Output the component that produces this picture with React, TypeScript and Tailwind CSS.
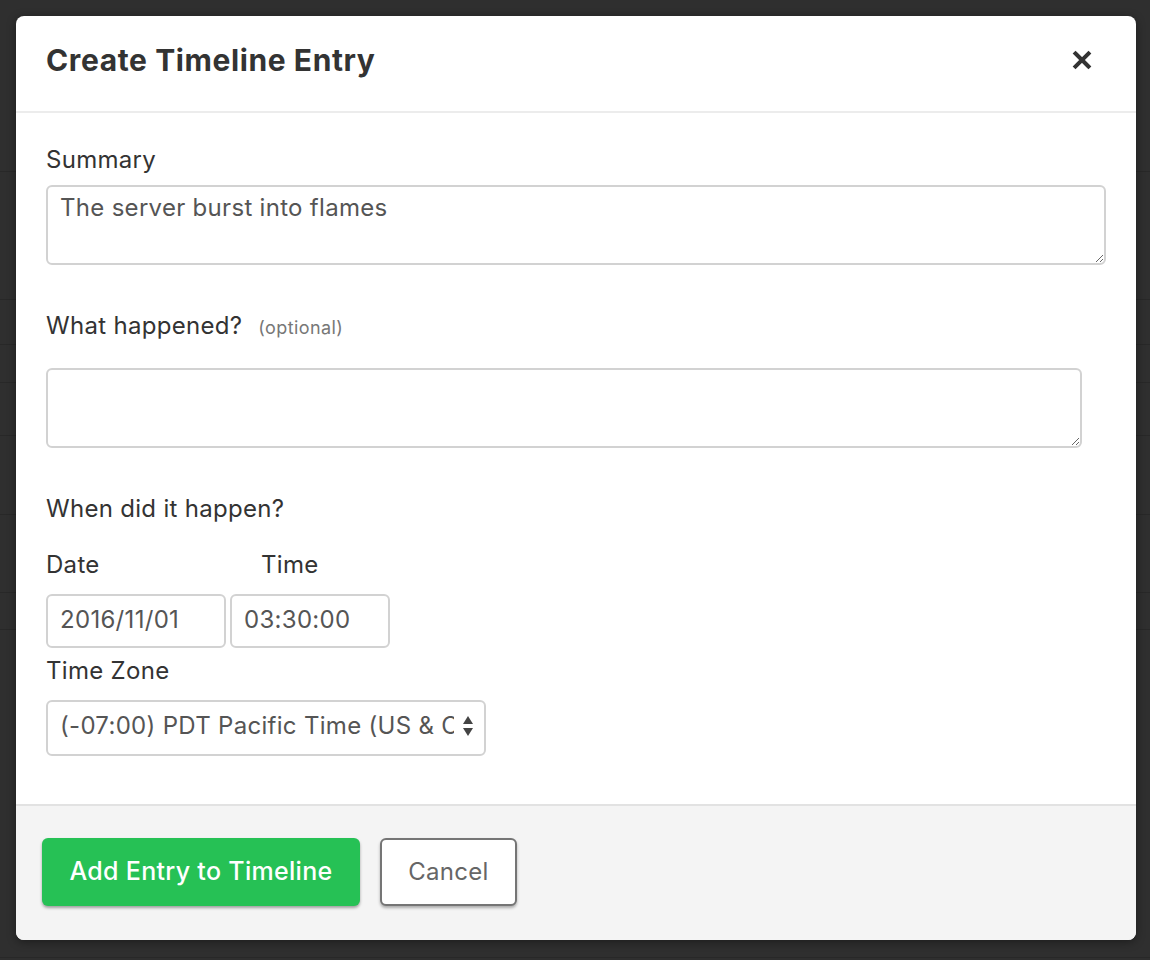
import React from 'react';

const font = { fontFamily: 'Inter, Lato, "Open Sans", sans-serif' };

// faint rows of the page behind the overlay, only visible at the left edge
const bgRows = [172, 128, 45, 38, 53, 79, 78, 37, 328];

function CloseIcon() {
  return (
    <svg width="20" height="20" viewBox="0 0 20 20" className="text-[#333]">
      <path d="M3.5 3.5 L16.5 16.5 M16.5 3.5 L3.5 16.5" stroke="currentColor" strokeWidth="4" strokeLinecap="square" />
    </svg>
  );
}

function SelectArrows() {
  return (
    <svg width="12" height="22" viewBox="0 0 12 22" className="text-[#444]">
      <path d="M6 1 L11 9 L1 9 Z" fill="currentColor" />
      <path d="M6 21 L11 13 L1 13 Z" fill="currentColor" />
    </svg>
  );
}

export default function App() {
  return (
    <div className="relative h-[960px] w-full bg-[#2f2f2f] overflow-hidden" style={font}>
      {/* Background page */}
      <div className="flex flex-col">
        {bgRows.map((h, i) => (
          <div key={i} className="border-b border-[#282828]" style={{ height: h }} />
        ))}
      </div>

      {/* Modal */}
      <div className="absolute left-4 top-4 w-[1120px] h-[924px] bg-white rounded-lg overflow-hidden flex flex-col shadow-[0_2px_10px_rgba(0,0,0,0.4)]">
        <div className="h-[97px] flex items-center justify-between pl-[30px] pr-[44px] border-b-2 border-[#ececec] shrink-0">
          <h1 className="text-[30px] font-bold text-[#333] leading-none -mt-2 tracking-[0.6px]">Create Timeline Entry</h1>
          <button className="-mt-2">
            <CloseIcon />
          </button>
        </div>

        <div className="flex-1 px-[30px] pt-[32px] text-[24px] leading-[30px] text-[#333] tracking-[0.3px]">
          <label className="block">Summary</label>
          <textarea
            className="mt-[10px] block w-[1060px] h-[80px] border-2 border-[#d2d2d2] rounded-md px-[12px] py-[6px] text-[#555] outline-none resize-y"
            defaultValue="The server burst into flames"
          />

          <div className="mt-[46px] flex items-baseline">
            <span>What happened?</span>
            <span className="ml-4 text-[18px] text-[#777] tracking-[0.4px]">(optional)</span>
          </div>
          <textarea className="mt-[25px] block w-[1036px] h-[80px] border-2 border-[#d2d2d2] rounded-md px-[12px] py-[6px] text-[#555] outline-none resize-y" />

          <div className="mt-[46px]">When did it happen?</div>

          <div className="mt-[26px] flex">
            <span className="w-[215px]">Date</span>
            <span>Time</span>
          </div>
          <div className="mt-[14px] flex gap-[4px]">
            <input
              className="w-[180px] h-[54px] border-2 border-[#d2d2d2] rounded-md px-[12px] pb-[4px] text-[#555] outline-none"
              defaultValue="2016/11/01"
            />
            <input
              className="w-[160px] h-[54px] border-2 border-[#d2d2d2] rounded-md px-[12px] pb-[4px] text-[#555] outline-none"
              defaultValue="03:30:00"
            />
          </div>

          <div className="mt-[8px]">Time Zone</div>
          <div className="mt-[14px] relative w-[440px] h-[56px]">
            <select className="appearance-none w-full h-full border-2 border-[#d2d2d2] rounded-md pl-[12px] pr-[30px] pb-[4px] text-[#555] bg-white outline-none">
              <option>(-07:00) PDT Pacific Time (US &amp; Canada)</option>
            </select>
            <div className="absolute right-[12px] top-[15px] pointer-events-none">
              <SelectArrows />
            </div>
          </div>
        </div>

        <div className="h-[136px] shrink-0 bg-[#f4f4f4] border-t-2 border-[#e2e2e2] flex items-center gap-[20px] pl-[26px] pb-[2px] tracking-[0.3px]">
          <button className="w-[318px] h-[68px] bg-[#26c155] text-white text-[25px] font-medium rounded-md shadow-[0_2px_3px_rgba(0,0,0,0.35)]">
            Add Entry to Timeline
          </button>
          <button className="w-[137px] h-[68px] bg-white text-[#666] text-[24px] border-2 border-[#757575] rounded-md shadow-[0_2px_3px_rgba(0,0,0,0.3)]">
            Cancel
          </button>
        </div>
      </div>
    </div>
  );
}
